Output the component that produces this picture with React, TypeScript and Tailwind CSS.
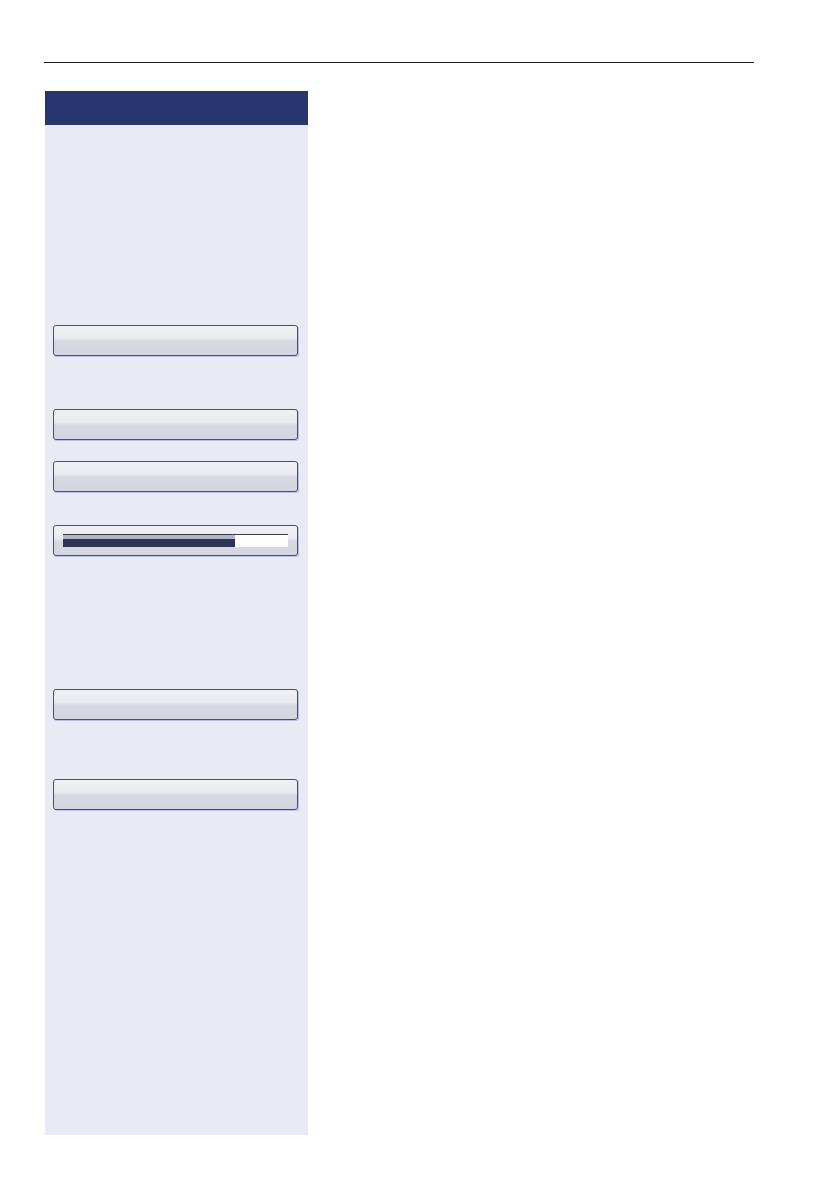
const buttonClass =
  "h-[31px] w-[245px] rounded-[3px] border border-[#4a4d6c] bg-[linear-gradient(to_bottom,#eef0f4_0%,#e9ebf0_42%,#d6d9e1_52%,#d3d6de_100%)] shadow-[1px_1px_0_#bcc0e0]";

const Key = ({ className = "" }: { className?: string }) => (
  <div className={`${buttonClass} ${className}`} />
);

const SliderKey = ({ value, className = "" }: { value: number; className?: string }) => (
  <div className={`${buttonClass} ${className} px-[9px] pt-[8px]`}>
    <div className="flex h-[13px] w-full flex-col bg-white">
      <div className="h-px w-full bg-[#3a3d52]" />
      <div className="flex flex-1 flex-col" style={{ width: `${value}%` }}>
        <div className="h-[4px] bg-[#b4b7c3]" />
        <div className="flex-1 bg-[#2e3454]" />
      </div>
    </div>
  </div>
);

export default function App() {
  return (
    <div className="min-h-[1192px] w-[838px] bg-white pl-[44px] pt-[62px] font-['Liberation_Sans',sans-serif]">
      <div className="h-px w-[710px] bg-[#1a1a1a]" />

      <div className="ml-px mt-[28px] w-[263px]">
        {/* title bar */}
        <div className="h-[34px] bg-[#283670]" />

        {/* key column */}
        <div className="flex h-[1010px] flex-col bg-[#e8ebf4] pl-[8px]">
          <Key className="mt-[200px]" />
          <Key className="mt-[53px]" />
          <Key className="mt-[21px]" />
          <SliderKey value={76.5} className="mt-[33px]" />
          <Key className="mt-[133px]" />
          <Key className="mt-[59px]" />
        </div>
      </div>
    </div>
  );
}
